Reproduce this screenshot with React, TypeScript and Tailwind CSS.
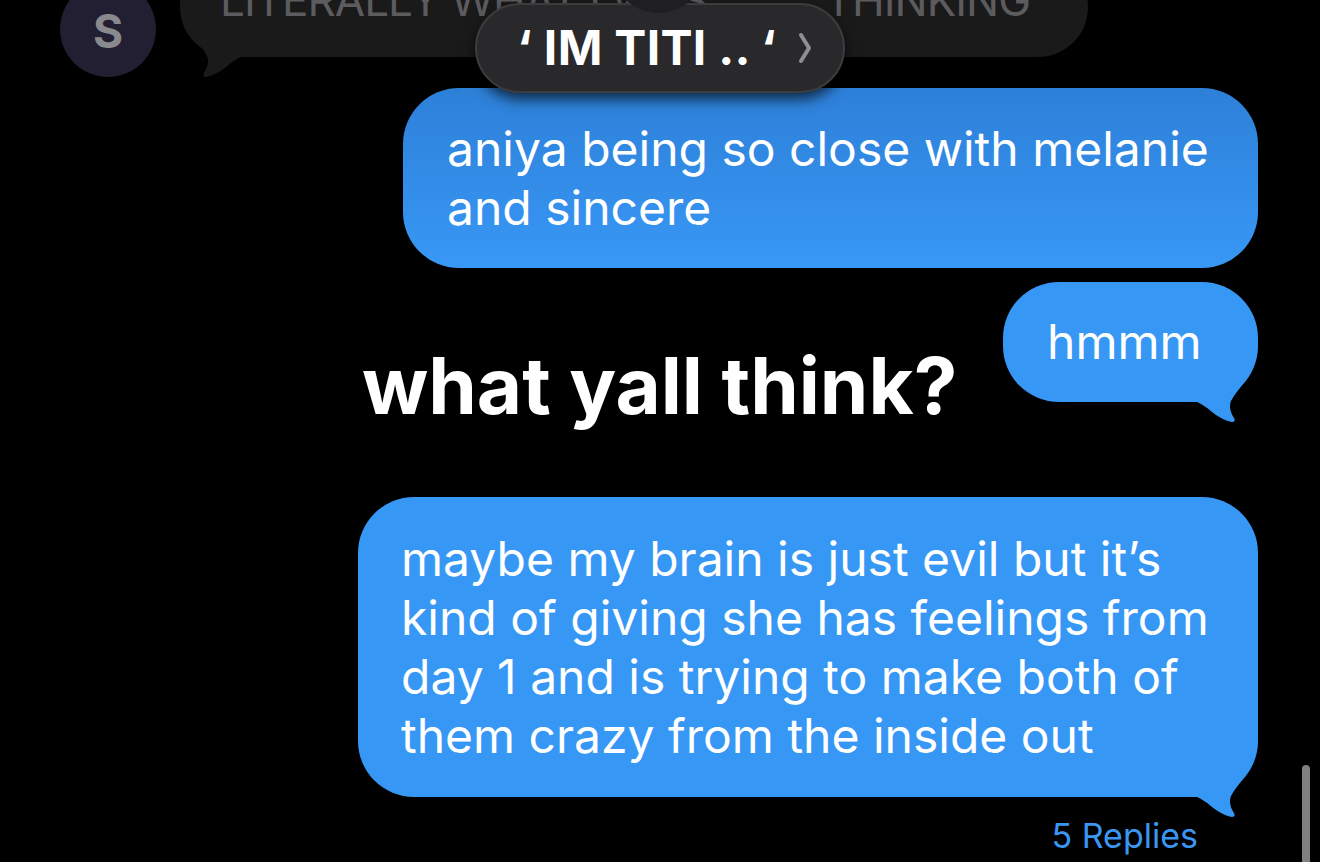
import React from 'react';

const BLUE = '#3797f5';

// iMessage tail; drawn for the bottom-right corner, mirrored for incoming bubbles
const Tail: React.FC<{ color: string; flip?: boolean }> = ({ color, flip }) => (
  <svg
    className={`absolute bottom-[-22px] ${flip ? 'left-0 -scale-x-100' : 'right-0'}`}
    width="70"
    height="80"
    viewBox="0 0 70 80"
  >
    <path
      d="M0 0 L0 58 L9 58 C14 60 18 63 24 68 C30 73 38 77 44 78 Q48 78 46 74 C42 68 41 62 43 57 C47 49 56 40 62 30 C66 22 69 12 70 0 Z"
      fill={color}
    />
  </svg>
);

interface BubbleProps {
  className: string;
  children: React.ReactNode;
}

// outgoing blue bubble with its tail
const Bubble: React.FC<BubbleProps> = ({ className, children }) => (
  <div className={`relative text-white text-[48px] leading-[59px] ${className}`}>
    <Tail color={BLUE} />
    <div className="relative h-full rounded-[56px] bg-[#3797f5]">{children}</div>
  </div>
);

export default function App() {
  return (
    <div className="relative w-[1320px] h-[862px] bg-black overflow-hidden font-['Inter','Liberation_Sans',sans-serif]">
      {/* incoming message, scrolled mostly off the top */}
      <div className="flex items-start pl-[60px] mt-[-19px]">
        <div className="w-[96px] h-[96px] rounded-full bg-[#221f33] flex items-center justify-center pt-[4px]">
          <span className="text-[46px] font-bold text-[#8a8a8e] leading-none">S</span>
        </div>
        <div className="relative ml-[24px] mt-[-24px] w-[908px] h-[100px]">
          <Tail color="#1a1a1b" flip />
          <div className="relative h-full rounded-[50px] bg-[#1a1a1b] flex justify-between pl-[40px] pr-[58px] pt-[21px] text-[44px] leading-none text-[#5c5c5e] tracking-[-1px]">
            <span>LITERALLY WHAT I WAS</span>
            <span>THINKING</span>
          </div>
        </div>
      </div>

      {/* quoted reply pill with the tapback bump over its top edge */}
      <div className="absolute left-[475px] top-[3px] w-[370px] h-[90px] rounded-full bg-[#29292b] border-2 border-[#3c3c3e] shadow-[0_6px_14px_rgba(0,0,0,0.7)] flex items-center pl-[40px]">
        <span className="text-[48px] font-bold text-white leading-none tracking-[0.3px]">‘ IM TITI .. ‘</span>
        <svg className="ml-[22px]" width="14" height="32" viewBox="0 0 14 32">
          <path d="M3 3 L11 16 L3 29" fill="none" stroke="#8e8e93" strokeWidth="4" strokeLinecap="round" strokeLinejoin="round" />
        </svg>
      </div>
      <div className="absolute left-[610px] top-[-84px] w-[97px] h-[97px] rounded-full bg-[#1f1f21]" />

      <div className="flex flex-col items-end pr-[62px] mt-[11px]">
        <div className="w-[855px] h-[180px] rounded-[56px] pl-[44px] pt-[31px] bg-gradient-to-b from-[#2d80d8] to-[#3898f6] text-white text-[48px] leading-[59px]">
          aniya being so close with melanie
          <br />
          and sincere
        </div>

        <div className="self-stretch h-[120px] flex items-start mt-[14px]">
          <div className="flex-1 pl-[362px] pt-[65px]">
            <span className="text-[78px] font-bold text-white leading-none whitespace-nowrap">what yall think?</span>
          </div>
          <Bubble className="w-[255px] h-[120px]">
            <div className="pl-[44px] pt-[30px]">hmmm</div>
          </Bubble>
        </div>

        <Bubble className="w-[900px] h-[300px] mt-[95px]">
          <div className="pl-[43px] pt-[32px]">
            maybe my brain is just evil but it’s
            <br />
            kind of giving she has feelings from
            <br />
            day 1 and is trying to make both of
            <br />
            them crazy from the inside out
          </div>
        </Bubble>

        <div className="mt-[19px] mr-[60px] text-[34px] leading-[40px] text-[#3a96f0]">5 Replies</div>
      </div>

      {/* scroll indicator */}
      <div className="absolute left-[1302px] top-[765px] w-[8px] h-[110px] rounded-full bg-[#808080]" />
    </div>
  );
}
